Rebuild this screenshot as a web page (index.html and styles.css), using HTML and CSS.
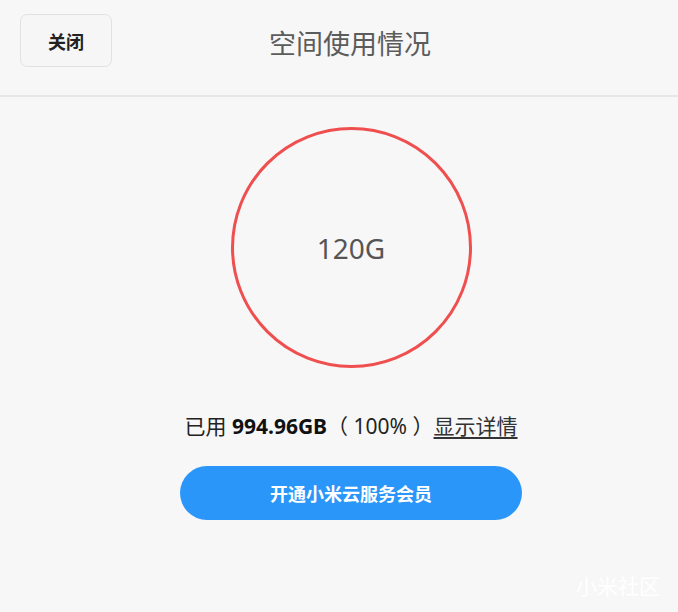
FILE: index.html
```html
<!DOCTYPE html>
<html>

<head>
    <meta charset="utf-8">
    <link rel="stylesheet" href="styles.css">
</head>

<body>
    <div class="page">
        <div class="header">
            <div class="header-left">
                <button class="close-btn">关闭</button>
            </div>
            <div class="title">空间使用情况</div>
            <div></div>
        </div>
        <div class="content">
            <div class="ring">120G</div>
            <div class="usage">已用 <b>994.96GB</b>（ 100% ）<a href="#">显示详情</a></div>
            <button class="vip-btn">开通小米云服务会员</button>
        </div>
    </div>
    <div class="watermark">小米社区</div>
</body>

</html>
```

FILE: styles.css
```css
html, body {
    margin: 0;
    height: 100%;
    overflow: hidden;
    background-color: #f7f7f7;
    font-family: "Noto Sans", "Noto Sans CJK SC", sans-serif;
}

.page {
    width: 700px;
}

.header {
    height: 95px;
    display: grid;
    grid-template-columns: 1fr auto 1fr;
    align-items: start;
    border-bottom: 2px solid #e6e6e6;
}

.header-left {
    padding-left: 20px;
    padding-top: 14px;
}

.close-btn {
    width: 92px;
    height: 53px;
    background-color: #f6f6f6;
    border: 1px solid #e2e2e2;
    border-radius: 7px;
    font-family: "Noto Sans CJK SC", sans-serif;
    font-size: 18px;
    font-weight: bold;
    color: #222;
    padding: 0;
}

.title {
    font-family: "Noto Sans CJK SC", sans-serif;
    font-size: 27px;
    line-height: 40px;
    color: #5c5c5c;
    padding-top: 23px;
}

.content {
    display: flex;
    flex-direction: column;
    align-items: center;
    padding-top: 30px;
    padding-left: 2px;
}

.ring {
    width: 235px;
    height: 235px;
    border: 3px solid #ef4f4f;
    border-radius: 50%;
    display: flex;
    justify-content: center;
    align-items: center;
    font-size: 28px;
    color: #555;
}

.usage {
    margin-top: 43px;
    font-size: 21px;
    line-height: 30px;
    color: #222;
    font-family: "Noto Sans", "Noto Sans CJK SC", sans-serif;
}

.usage b {
    color: #111;
}

.usage a {
    color: #333;
    text-decoration: underline;
    text-underline-offset: 3px;
}

.vip-btn {
    margin-top: 25px;
    width: 342px;
    height: 54px;
    border: none;
    border-radius: 27px;
    background-color: #2a96f9;
    color: #fff;
    font-family: "Noto Sans CJK SC", sans-serif;
    font-size: 18px;
    font-weight: bold;
}

.watermark {
    position: absolute;
    right: 18px;
    bottom: 12px;
    font-family: "Noto Sans CJK SC", sans-serif;
    font-size: 21px;
    color: #fff;
}
```
